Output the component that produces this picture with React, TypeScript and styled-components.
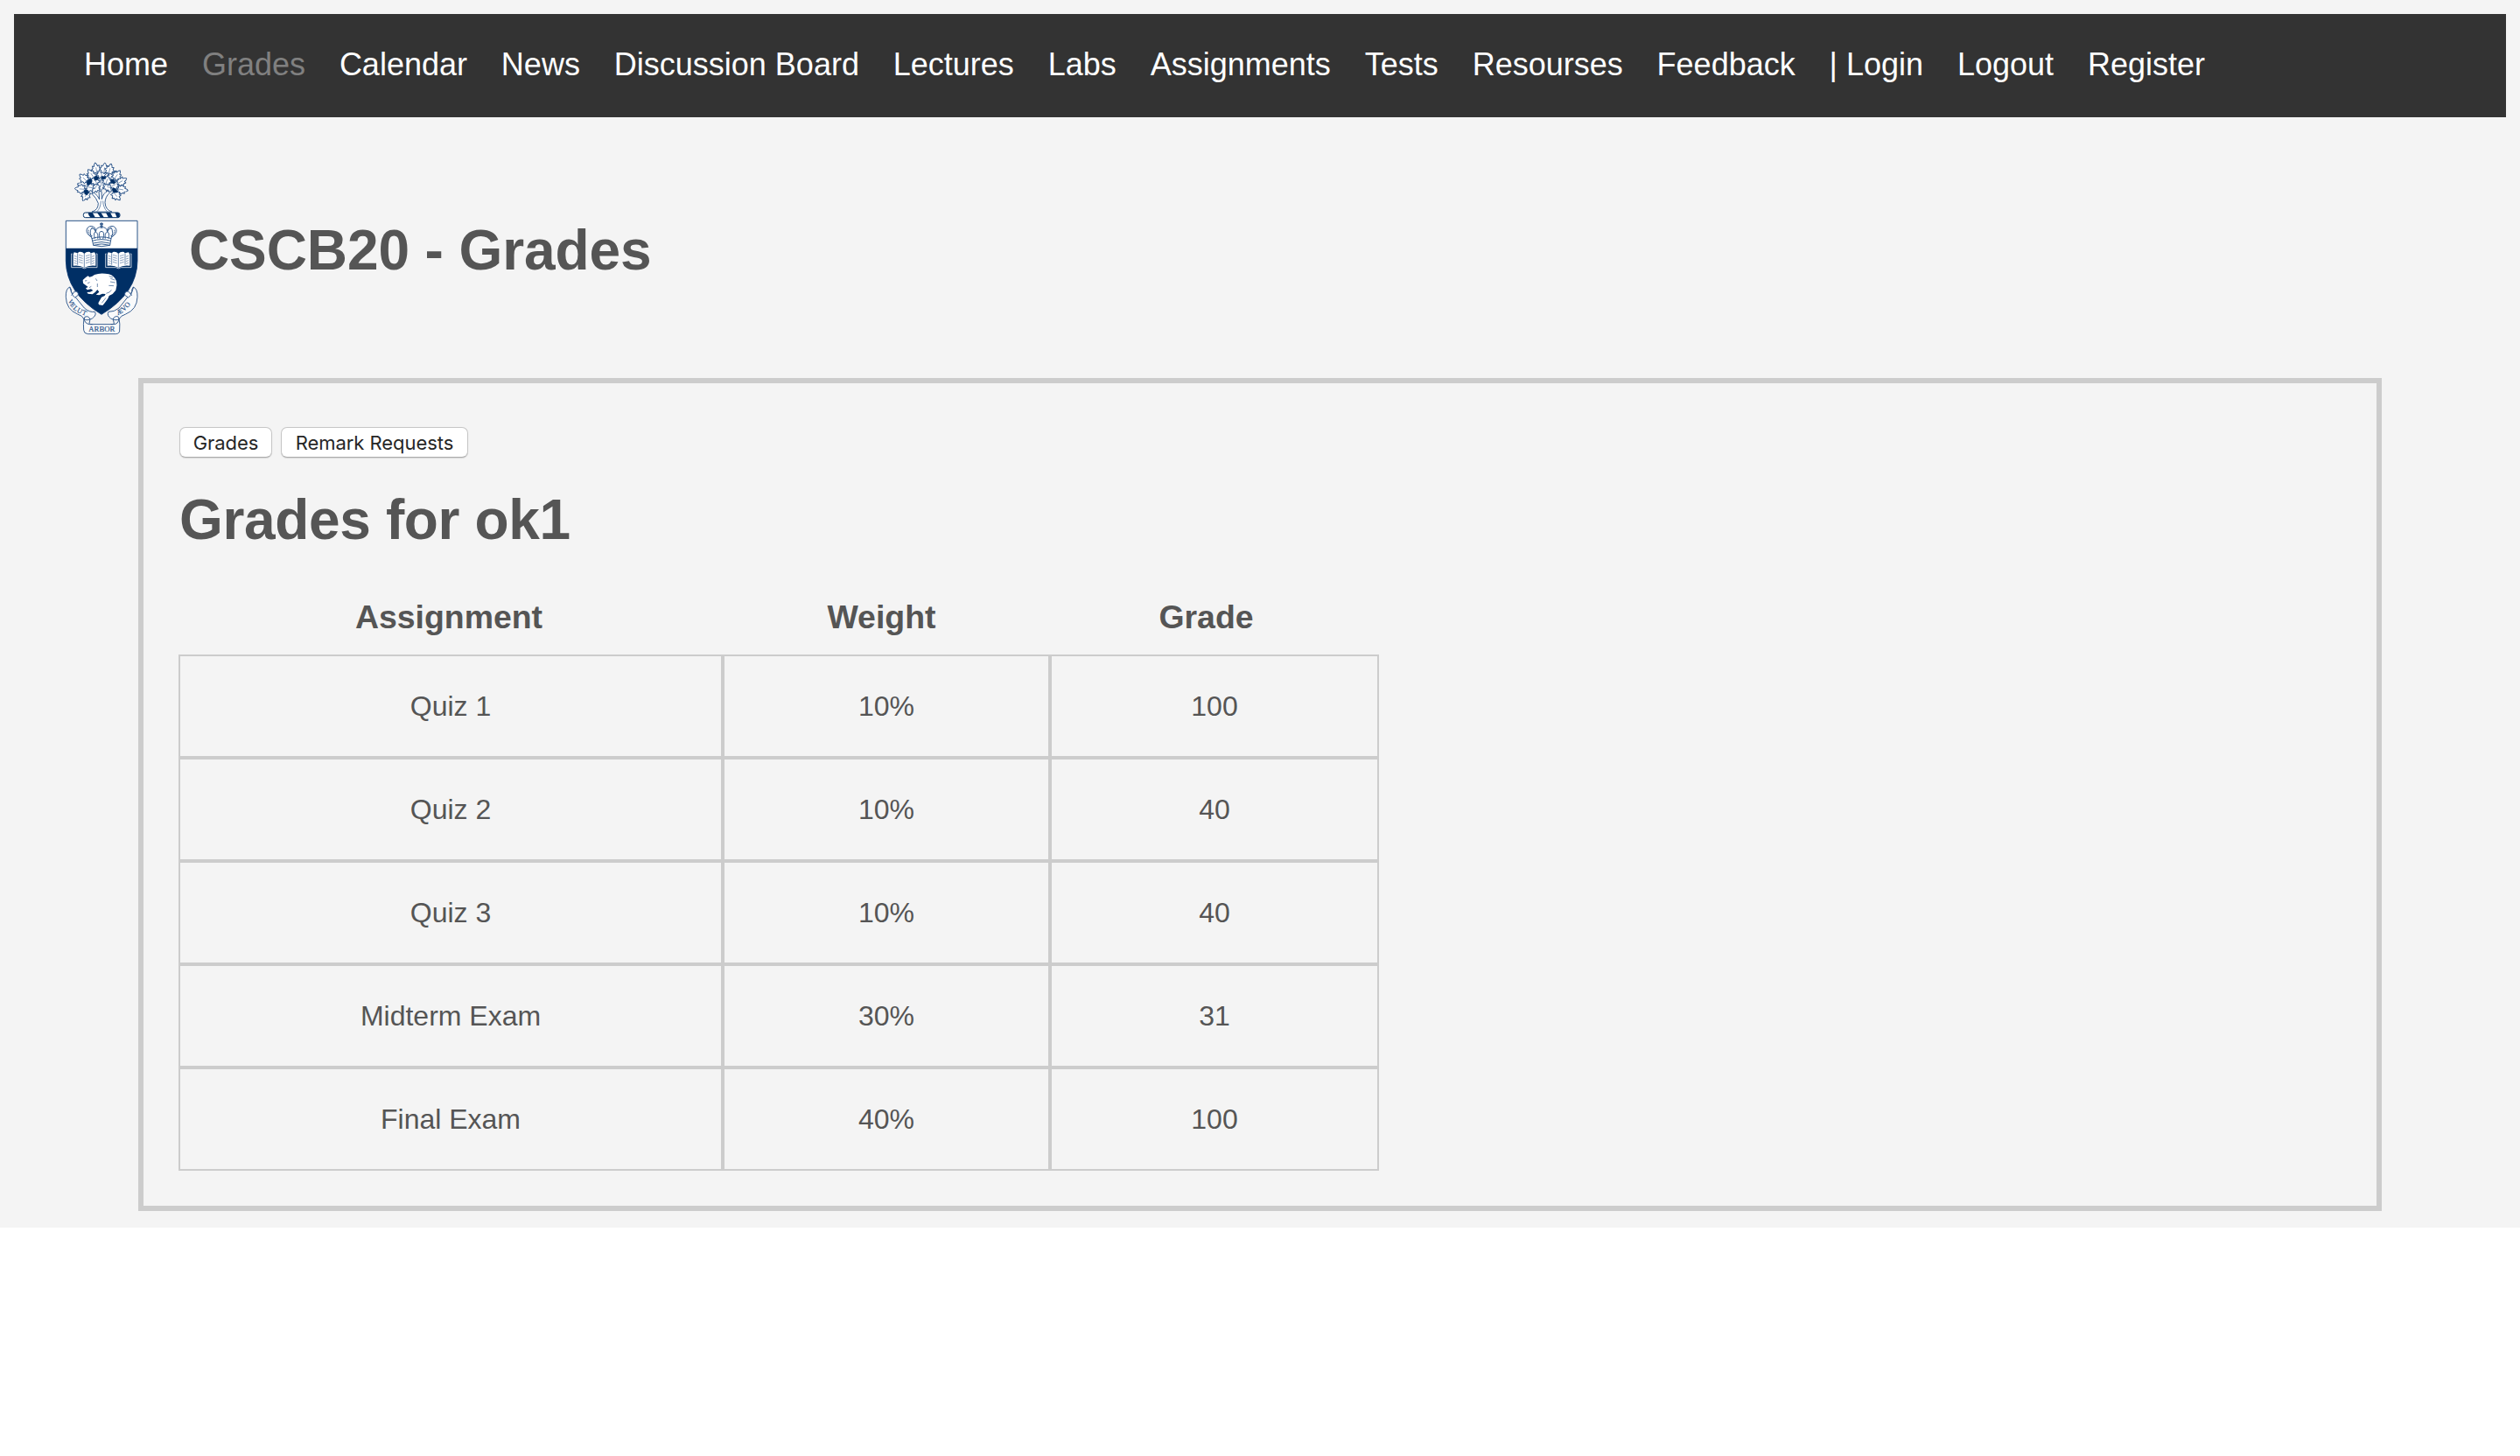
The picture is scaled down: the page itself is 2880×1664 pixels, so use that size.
import React from "react";
import styled, { createGlobalStyle } from "styled-components";

const NAVY = "#002f65";
const INK = "#2b5489";

const GlobalStyle = createGlobalStyle`
  body {
    margin: 0;
    background: #fff;
    font-family: "Liberation Sans", Arial, Helvetica, sans-serif;
    color: #555;
  }
`;

const Page = styled.div`
  box-sizing: border-box;
  height: 1403px;
  padding: 16px;
  background: #f4f4f4;
`;

const NavBar = styled.nav`
  box-sizing: border-box;
  height: 118px;
  padding: 37px 0 0 80px;
  background: #333;
  display: flex;
  align-items: flex-start;
  gap: 38.9px;
`;

const NavLink = styled.a<{ $active?: boolean }>`
  font-size: 36px;
  line-height: 41px;
  white-space: pre;
  text-decoration: none;
  color: ${(p) => (p.$active ? "#808080" : "#fff")};
`;

const Header = styled.header`
  display: flex;
  align-items: flex-start;
  gap: 46px;
  height: 298px;
  padding-left: 44px;
`;

const Crest = styled.svg`
  flex: none;
  width: 110px;
  height: 220px;
  margin-top: 36px;
`;

const Title = styled.h1`
  margin: 116px 0 0;
  font-size: 64px;
  line-height: 72px;
  font-weight: bold;
  letter-spacing: -0.1px;
`;

const Panel = styled.main`
  box-sizing: border-box;
  width: 2564px;
  height: 952px;
  margin-left: 142px;
  padding: 50px 40px 0;
  border: 6px solid #ccc;
`;

const Buttons = styled.div`
  display: flex;
  gap: 10px;
  padding-left: 1px;
`;

const Button = styled.button<{ $width: number }>`
  box-sizing: border-box;
  width: ${(p) => p.$width}px;
  height: 35px;
  padding: 1px 0 0;
  border: 1px solid #c6c6c6;
  border-bottom-color: #acacac;
  border-radius: 7px;
  background: #fff;
  box-shadow: 0 1px 1px rgba(0, 0, 0, 0.12);
  font: 22px/32px Inter, sans-serif;
  letter-spacing: -0.05px;
  color: #262626;
  white-space: nowrap;
`;

const SectionTitle = styled.h1`
  margin: 35px 0 0 1px;
  font-size: 64px;
  line-height: 72px;
  font-weight: bold;
  letter-spacing: -0.35px;
`;

const GradeTable = styled.div`
  margin-top: 54px;
`;

const HeadRow = styled.div`
  display: grid;
  grid-template-columns: 618px 371px 371px;
  height: 64px;
`;

const HeadCell = styled.h3`
  margin: 0;
  font-size: 37.44px;
  line-height: 42px;
  text-align: center;
`;

const Row = styled.div`
  display: grid;
  grid-template-columns: 622px 374px 376px;
  height: 118px;
`;

const Cell = styled.div`
  box-sizing: border-box;
  padding-top: 39px;
  border: 2px solid #ccc;
  font-size: 32px;
  line-height: 36px;
  text-align: center;
`;

const links = [
  "Home", "Grades", "Calendar", "News", "Discussion Board", "Lectures", "Labs",
  "Assignments", "Tests", "Resourses", "Feedback", "| Login", "Logout", "Register",
];

const grades = [
  ["Quiz 1", "10%", "100"],
  ["Quiz 2", "10%", "40"],
  ["Quiz 3", "10%", "40"],
  ["Midterm Exam", "30%", "31"],
  ["Final Exam", "40%", "100"],
];

// Leaf positions: x, y, rotation
const leaves: [number, number, number][] = [
  [167, 122, 180], [147, 134, -150], [190, 130, 150],
  [146, 108, -30], [187, 108, 20],
  [126, 132, -80], [212, 124, 60], [134, 88, -35], [206, 92, 40],
  [106, 124, -80], [236, 112, 60], [108, 102, -45],
  [97, 138, -85], [238, 140, 100], [114, 160, -150], [218, 160, 140],
  [150, 69, -10], [168, 86, -5], [178, 69, 5], [196, 72, 15], [220, 92, 35],
];

const Book = ({ x }: { x: number }) => (
  <g transform={`translate(${x} 350)`} strokeLinejoin="round">
    <path d="M2 10H-1V57H34Q43 64 52 57H87V10H84" fill={NAVY} stroke="#dfe6ef" strokeWidth="2.5" />
    <path d="M43 10Q36 2 24 4L21 8 8 5 5 12V51Q29 48 43 58Q58 48 82 51V12L78 5 65 8 62 4Q50 2 43 10Z" fill="#fff" />
    <path d="M43 10V57M20 8V48M66 8V48" stroke={INK} strokeWidth="2" fill="none" />
    <path d="M8 17l9 3M8 25l9 3M8 33l9 3M8 41l9 3M24 14l14 4M24 22l14 4M24 30l14 4M24 38l14 4M48 18l14-4M48 26l14-4M48 34l14-4M48 42l14-4M69 20l9-3M69 28l9-3M69 36l9-3M69 44l9-3" stroke={INK} strokeWidth="1.6" fill="none" />
  </g>
);

const UniversityCrest = () => (
  <Crest viewBox="0 0 330 660" aria-label="University crest">
    <defs>
      <path
        id="leaf"
        d="M0 17L-4 12-12 14-10 6-17 1-11-3-12-11-6-9-4-17 0-21 4-16 6-9 12-11 11-3 17 1 10 6 12 14 4 12Z"
      />
    </defs>

    <g stroke={INK} strokeWidth="2.8" strokeLinejoin="round" strokeLinecap="round">
      <path d="M136 216Q157 210 157 187Q151 169 134 153L143 151Q157 162 161 174L159 146H168L169 173Q174 151 190 145L196 151Q181 164 180 184Q181 210 203 216Z" fill="#fff" />
      <path d="M166 180Q165 204 153 215M173 180Q174 203 187 215" fill="none" strokeWidth="2" />
      {leaves.map(([x, y, r], i) => (
        <g key={i} transform={`translate(${x} ${y}) rotate(${r})`}>
          <use href="#leaf" fill="#fff" />
          <path d="M0-4V12" fill="none" strokeWidth="1.6" />
        </g>
      ))}
      <g fill={NAVY} stroke={NAVY} strokeWidth="1">
        <path d="M119 110l9-7 8 5-3 11-10 7-5-7Z" />
        <path d="M142 98l10-5 7 6-4 8-10 2Z" />
        <path d="M168 94l13 1 2 8-9 2-7-4Z" />
        <path d="M199 108l8-4 10 12-7 5-8-4Z" />
        <path d="M208 133l12 8 2 9-11 1-6-8Z" />
        <path d="M107 145l10-5 7 10-5 9-8-3Z" />
      </g>
    </g>

    <rect x="106" y="219" width="125" height="17" rx="7" fill="#fff" stroke={NAVY} strokeWidth="3" />
    <path d="M122 219H137L147 236H131Q122 228 122 219ZM153 219H166L177 236H165ZM183 219H198L207 236H192ZM214 219H224Q232 222 230 231L226 236H221Z" fill={NAVY} />

    <path d="M46 247H291V384Q290 495 168 568Q47 495 46 384Z" fill="#fff" stroke={INK} strokeWidth="3" />
    <path d="M46 341H291V384Q290 495 168 568Q47 495 46 384Z" fill={NAVY} />

    <g stroke={INK} strokeWidth="2.8" fill="#fff" strokeLinejoin="round">
      <path d="M134 304Q108 287 121 270Q132 260 145 271Q152 280 144 289M202 304Q228 287 215 270Q205 260 191 271Q184 280 192 289" />
      <path d="M135 307Q126 287 132 275Q141 268 148 285Q151 266 168 270Q185 266 188 285Q196 268 204 275Q210 289 201 307L197 331Q168 339 140 331Z" />
      <path d="M145 308Q139 285 148 286Q158 288 155 308M181 308Q178 287 188 286Q197 286 192 308M163 309Q155 284 168 283Q181 284 173 309" fill="none" />
      <path d="M134 308Q168 297 202 308M136 316Q168 306 200 316M139 324Q168 315 197 324M140 331Q168 322 197 331" fill="none" />
      <path d="M168 253V272M162 258H174M163 265H173" strokeWidth="4" />
      <path d="M124 278Q119 289 136 300M212 278Q217 289 200 300M134 270L149 279M202 270L187 279" strokeDasharray="3 3" strokeWidth="4" fill="none" />
    </g>

    <Book x={66} />
    <Book x={183} />

    <path d="M104 450L115 440 122 436 127 440Q137 438 144 432Q164 424 193 430Q211 435 219 453Q223 470 217 485Q209 498 194 504L190 514 179 529 172 537 159 535 157 529 168 509 179 504 182 498 171 497 160 502 149 500 160 491 154 483 147 491 137 499 122 497 118 492 129 491 139 486 132 481 119 484 114 478 122 474 111 466 105 461Z" fill="#fff" />
    <path d="M111 453l7-1M120 461l8-3M126 476l7-4M148 445l5 8M154 462v12M194 437l13 4M199 445l15 5M198 456l17 3M193 469l17 1M184 496q13-2 18-12M169 529l14-18" fill="none" stroke={INK} strokeWidth="2" />

    <g stroke={INK} strokeWidth="2.8" fill="#f9fafb" strokeLinejoin="round">
      <path d="M59 474Q45 480 46 508Q47 551 86 567Q103 572 108 584Q117 591 136 582Q153 569 145 559Q127 562 109 546L64 491Q66 481 59 474Z" />
      <path d="M277 474Q292 480 291 508Q290 551 251 567Q234 572 228 584Q218 591 200 582Q185 571 192 559Q212 560 228 546L272 491Q271 481 277 474Z" />
      <path d="M59 474L65 492Q67 504 77 510L88 502Q90 489 76 489L65 503M278 474L272 492Q270 504 260 510L248 502Q246 489 260 489L272 503" />
      <path d="M108 582Q105 601 107 622Q108 634 121 635H217Q231 634 230 621Q232 600 228 582Q226 602 209 602H128Q111 601 108 582Z" />
      <path d="M108 584Q108 574 119 575Q132 579 127 594Q123 603 137 602M228 584Q228 573 217 575Q204 579 210 594Q214 603 200 602" fill="none" />
    </g>
    <g fill={INK} stroke={INK} strokeWidth="0.6" fontFamily="Liberation Serif, serif">
      <text x="53" y="521" transform="rotate(64 53 521)" fontSize="22">V</text>
      <text x="60" y="535" transform="rotate(53 60 535)" fontSize="22">E</text>
      <text x="70" y="548" transform="rotate(42 70 548)" fontSize="23">L</text>
      <text x="82" y="558" transform="rotate(31 82 558)" fontSize="24">U</text>
      <text x="100" y="567" transform="rotate(22 100 567)" fontSize="24">T</text>
      <text x="224" y="571" transform="rotate(-30 224 571)" fontSize="24">Æ</text>
      <text x="244" y="559" transform="rotate(-43 244 559)" fontSize="24">V</text>
      <text x="258" y="547" transform="rotate(-55 258 547)" fontSize="24">O</text>
      <text x="124" y="628" fontSize="26" textLength="90" lengthAdjust="spacingAndGlyphs">ARBOR</text>
    </g>
  </Crest>
);

export default function App() {
  return (
    <>
      <GlobalStyle />
      <Page>
        <NavBar>
          {links.map((label) => (
            <NavLink key={label} $active={label === "Grades"}>{label}</NavLink>
          ))}
        </NavBar>
        <Header>
          <UniversityCrest />
          <Title>CSCB20 - Grades</Title>
        </Header>
        <Panel>
          <Buttons>
            <Button $width={106}>Grades</Button>
            <Button $width={214}>Remark Requests</Button>
          </Buttons>
          <SectionTitle>Grades for ok1</SectionTitle>
          <GradeTable>
            <HeadRow>
              <HeadCell>Assignment</HeadCell>
              <HeadCell>Weight</HeadCell>
              <HeadCell>Grade</HeadCell>
            </HeadRow>
            {grades.map((row) => (
              <Row key={row[0]}>
                {row.map((value, i) => (
                  <Cell key={i}>{value}</Cell>
                ))}
              </Row>
            ))}
          </GradeTable>
        </Panel>
      </Page>
    </>
  );
}
